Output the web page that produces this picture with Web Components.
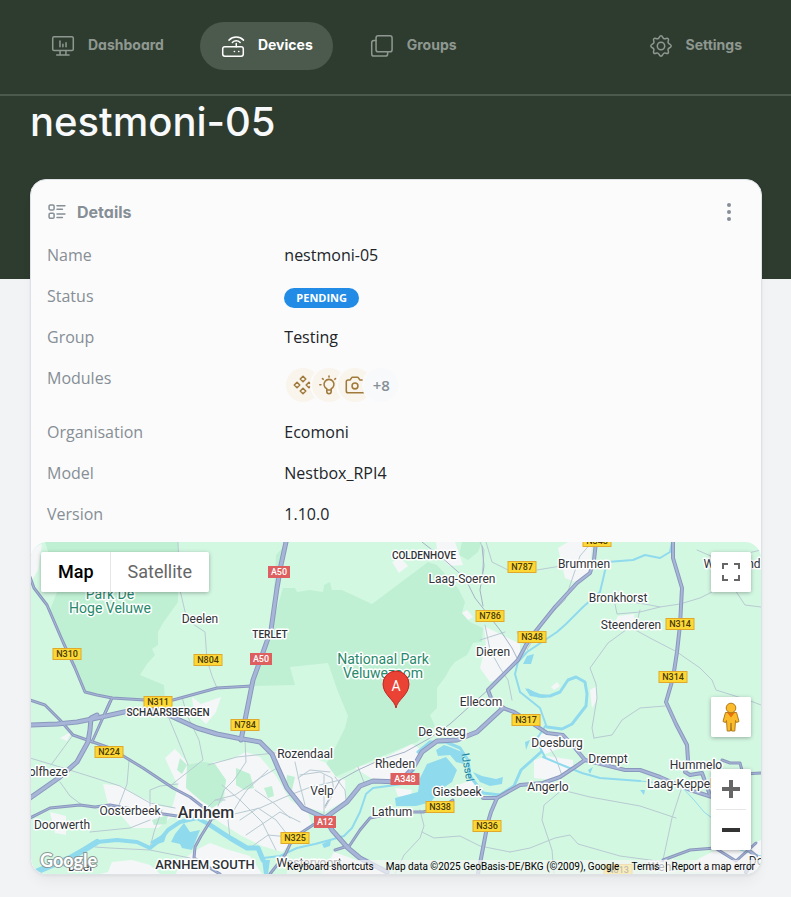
<!DOCTYPE html>
<html lang="en">
<head>
<meta charset="utf-8">
<meta name="viewport" content="width=device-width, initial-scale=1">
<title>nestmoni-05</title>
<style>
  :root {
    --green_dark: #2e3c30;
    --green_soft: #4b5a4d;
    --nav_text: #8f9890;
    --white: #f8f9fa;
    --page_bg: #f1f3f5;
    --card_bg: #fbfbfb;
    --grey_line: #dee2e6;
    --grey_text: #868e96;
    --text: #212529;
    --blue: #228be6;
    --brown: #a07a3b;
    --font_title: Inter, "Open Sans", sans-serif;
    --font_body: "Open Sans", "Noto Sans", sans-serif;
    --font_map: Roboto, "Liberation Sans", sans-serif;
  }
  body {
    margin: 0;
    background: var(--page_bg);
    color: var(--text);
    font-family: var(--font_body);
    font-size: 16px;
  }
</style>
</head>
<body>
<device-page heading="nestmoni-05">
  <app-nav slot="nav">
    <nav-item icon="dashboard">Dashboard</nav-item>
    <nav-item icon="devices" active>Devices</nav-item>
    <nav-item icon="groups">Groups</nav-item>
    <nav-item icon="settings" slot="end">Settings</nav-item>
  </app-nav>
  <details-card heading="Details">
    <map-view></map-view>
  </details-card>
</device-page>

<script>
const ICONS = {
  dashboard: `<rect x="2.5" y="3.5" width="19" height="12.7" rx="1.3"/><path d="M9.3 16.3v4M14.7 16.3v4M6.2 20.4h11.4M9.2 7.4v5.2M11.9 10.4v2.2M14.8 9v3.6"/>`,
  devices: `<rect x="2.5" y="12.6" width="19" height="8.8" rx="2"/><path d="M15 9.8v2.8M13.2 17h.2M17.2 17h.2M11.4 8.7a5 5 0 0 1 7.2 0M8.3 6.6a9.4 9.4 0 0 1 13.4 0"/>`,
  groups: `<rect x="6.5" y="2.6" width="14.8" height="14.8" rx="2"/><path d="M6.5 7h-2a2 2 0 0 0-2 2v10.3a2 2 0 0 0 2 2h10.7a2 2 0 0 0 2-2v-1.9"/>`,
  settings: `<circle cx="12" cy="12" r="3.4"/><path d="M12 2.6c1.600 0 1.500 2.200 2.900 2.700s2.600-1.100 3.700 0-.5 2.300 0 3.700 2.800 1.400 2.800 3-2.200 1.500-2.800 2.900 1.100 2.600 0 3.700-2.300-.5-3.700 0-1.300 2.800-2.900 2.800-1.500-2.200-2.900-2.800-2.600 1.100-3.700 0 .5-2.300 0-3.700S2.600 13.600 2.600 12s2.200-1.600 2.800-3-1.100-2.600 0-3.700 2.300.5 3.700 0 1.300-2.700 2.900-2.700z"/>`,
  details: `<rect x="2.5" y="3.5" width="6" height="6" rx="1.5"/><rect x="2.5" y="13.5" width="6" height="6" rx="1.5"/><path d="M12 4.5h9.5M12 8.7h6.5M12 14.3h9.5M12 18.6h6.5"/>`,
  diamonds: `<path d="M12 2.5l3 3-3 3-3-3zM12 15.5l3 3-3 3-3-3zM5.5 9l3 3-3 3-3-3zM18.5 9l3 3-3 3-3-3z"/>`,
  bulb: `<path d="M9.6 17.4v-1.3a5.4 5.4 0 1 1 4.8 0v1.3M9.6 17.4h4.8v1.8a2.4 2.4 0 0 1-4.8 0zM12 2.2v1.2M4.9 5l.8.8M19.1 5l-.8.8M2 11.8h1.2M20.8 11.8H22"/>`,
  camera: `<circle cx="12" cy="13" r="3.2"/><path d="M21.5 20.5h-17a2 2 0 0 1-2-2V8.5a2 2 0 0 1 2-2h2.3l1.4-2.3a1.4 1.4 0 0 1 1.2-.7h5.2a1.4 1.4 0 0 1 1.2.7l1.4 2.3h2.3a2 2 0 0 1 2 2v10"/>`
};

function icon(name, size, stroke) {
  return `<svg width="${size}" height="${size}" viewBox="0 0 24 24" fill="none" stroke="currentColor" stroke-width="${stroke}" stroke-linecap="round" stroke-linejoin="round" aria-hidden="true">${ICONS[name]}</svg>`;
}

class DevicePage extends HTMLElement {
  constructor() {
    super();
    this._root = this.attachShadow({ mode: 'open' });
    this._root.innerHTML =
      `<style>
        :host {
          display: block;
        }
        .banner {
          background: var(--green_dark);
          padding-bottom: 131px;
        }
        h1 {
          margin: 0 30px;
          color: var(--white);
          font-family: var(--font_title);
          font-feature-settings: "cv11";
          font-size: 40px;
          font-weight: 500;
          line-height: 52px;
        }
        main {
          margin: -100px 29px 0 30px;
          padding-bottom: 22px;
        }
      </style>
      <div class="banner">
        <slot name="nav"></slot>
        <h1></h1>
      </div>
      <main><slot></slot></main>`;
    this._root.querySelector('h1').textContent = this.getAttribute('heading');
  }
}

class AppNav extends HTMLElement {
  constructor() {
    super();
    this._root = this.attachShadow({ mode: 'open' });
    this._root.innerHTML =
      `<style>
        :host {
          display: block;
          border-bottom: 2px solid var(--green_soft);
        }
        nav {
          display: flex;
          justify-content: space-between;
          padding: 22px 29px 24px 30px;
        }
        .group {
          display: flex;
          gap: 16px;
        }
      </style>
      <nav>
        <div class="group"><slot></slot></div>
        <div class="group"><slot name="end"></slot></div>
      </nav>`;
  }
}

class NavItem extends HTMLElement {
  constructor() {
    super();
    this._root = this.attachShadow({ mode: 'open' });
    this._root.innerHTML =
      `<style>
        :host {
          display: block;
        }
        a {
          display: flex;
          align-items: center;
          gap: 12px;
          height: 48px;
          padding: 0 20px;
          border-radius: 24px;
          color: var(--nav_text);
          font-family: var(--font_title);
          font-feature-settings: "cv11";
          font-size: 14px;
          font-weight: 700;
          text-decoration: none;
        }
        span {
          padding-bottom: 3px;
        }
        :host([active]) a {
          background: var(--green_soft);
          color: #fff;
        }
      </style>
      <a href="#">${icon(this.getAttribute('icon'), 26, 1.4)}<span><slot></slot></span></a>`;
  }
}

class StatusBadge extends HTMLElement {
  constructor() {
    super();
    this._root = this.attachShadow({ mode: 'open' });
    this._root.innerHTML =
      `<style>
        :host {
          display: inline-block;
          vertical-align: middle;
          height: 20px;
          padding: 0 12px;
          border-radius: 10px;
          background: var(--blue);
          color: #fff;
          font-size: 11px;
          font-weight: 700;
          line-height: 20px;
        }
      </style>
      <slot></slot>`;
  }
}

class ModuleAvatar extends HTMLElement {
  constructor() {
    super();
    this._root = this.attachShadow({ mode: 'open' });
    const name = this.getAttribute('icon');
    this._root.innerHTML =
      `<style>
        :host {
          display: flex;
          align-items: center;
          justify-content: center;
          width: 34px;
          height: 34px;
          border: 2px solid var(--card_bg);
          border-radius: 50%;
          background: #f9f4ec;
          color: var(--brown);
        }
        :host(:not([icon])) {
          background: var(--white);
          color: var(--grey_text);
          font-size: 15px;
          font-weight: 600;
        }
      </style>
      ${name ? icon(name, 22, 1.7) : '<slot></slot>'}`;
  }
}

class DetailsCard extends HTMLElement {
  constructor() {
    super();
    this._root = this.attachShadow({ mode: 'open' });
    this._data = [
      ['Name', 'nestmoni-05'],
      ['Status', '<status-badge>PENDING</status-badge>'],
      ['Group', 'Testing'],
      ['Modules', `<div class="modules">
          <module-avatar icon="diamonds"></module-avatar>
          <module-avatar icon="bulb"></module-avatar>
          <module-avatar icon="camera"></module-avatar>
          <module-avatar>+8</module-avatar>
        </div>`],
      ['Organisation', 'Ecomoni'],
      ['Model', 'Nestbox_RPI4'],
      ['Version', '1.10.0']
    ];
    this._render();
  }

  _render() {
    this._root.innerHTML =
      `<style>
        :host {
          display: block;
          border: 1px solid var(--grey_line);
          border-radius: 16px;
          background: var(--card_bg);
          box-shadow: 0 1px 3px rgba(0, 0, 0, .05), 0 10px 15px -5px rgba(0, 0, 0, .06);
        }
        header {
          display: flex;
          align-items: center;
          gap: 10px;
          height: 55px;
          padding: 8px 16px 0;
          box-sizing: border-box;
          color: var(--grey_text);
        }
        h2 {
          flex: 1;
          margin: 0;
          font-family: var(--font_title);
          font-feature-settings: "cv11";
          font-size: 16px;
          font-weight: 700;
        }
        button {
          display: flex;
          align-items: center;
          justify-content: center;
          width: 32px;
          height: 32px;
          padding: 0;
          border: 0;
          background: none;
          color: inherit;
        }
        table {
          width: 100%;
          padding: 0 16px 7px;
          border-spacing: 0;
        }
        th, td {
          padding: 8px 0;
          line-height: 25px;
          text-align: left;
          vertical-align: top;
        }
        th {
          width: 34%;
          color: var(--grey_text);
          font-weight: 400;
        }
        .modules {
          display: flex;
        }
        .modules > * + * {
          margin-left: -12px;
        }
      </style>
      <header>
        ${icon('details', 20, 1.8)}
        <h2>${this.getAttribute('heading')}</h2>
        <button type="button" aria-label="More actions">
          <svg width="6" height="20" viewBox="0 0 6 20" fill="currentColor"><circle cx="3" cy="3" r="2"/><circle cx="3" cy="10" r="2"/><circle cx="3" cy="17" r="2"/></svg>
        </button>
      </header>
      <table><tbody>
        ${this._data.map(([name, value]) => `<tr><th scope="row">${name}</th><td>${value}</td></tr>`).join('')}
      </tbody></table>
      <slot></slot>`;
  }
}

/* map layers, all in the units of the map's viewBox */
const FOREST = [
  '45,542 178,542 178,602 163,623 158,632 158,645 152,649 155,655 147,664 140,675 164,685 165,700 112,698 85,692 63,642 50,610 57,592 48,572 51,560',
  '283,588 295,588 297,592 310,590 323,592 324,585 330,582 332,590 342,590 372,604 400,583 428,562 437,565 458,588 465,602 462,613 470,622 483,628 482,642 473,643 467,655 455,662 450,668 446,676 437,688 437,708 430,715 435,726 417,742 380,757 358,767 335,777 322,770 330,758 340,738 345,728 348,716 338,692 328,663 290,667 295,685 254,686 262,650 272,625',
  '462,542 482,542 478,552 468,560 459,555',
  '276,555 285,545 278,585 274,592',
  '187,765 203,762 215,764 226,780 222,802 212,808 200,800 186,788',
  '236,768 250,774 254,788 244,790 236,785',
  '180,758 187,765 182,774 177,770', '264,788 272,786 274,796 268,798',
  '152,820 168,815 166,824 154,825', '287,775 295,777 292,790 286,785'
];

const URBAN = [
  '103,784 122,786 138,796 160,806 172,808 178,786 165,758 175,749 188,763 186,785 200,800 212,808 224,800 226,780 213,762 230,760 246,752 260,757 276,776 290,800 308,812 312,826 296,838 282,852 262,846 240,835 215,819 195,815 170,818 158,828 132,828 118,812 108,804',
  '272,752 284,750 300,752 326,763 336,777 345,780 346,800 325,812 300,806 285,790',
  '196,850 210,843 226,849 250,856 262,874 176,874 180,862',
  '108,872 112,862 132,860 150,865 160,874 100,874',
  '355,768 380,760 412,744 422,750 410,770 395,780 374,780',
  '484,626 504,636 520,644 520,658 500,678 490,682 480,668 486,645',
  '558,548 568,542 592,542 590,573 575,582 565,578',
  '436,542 455,542 463,565 450,566 438,556', '392,562 401,558 408,566 399,573',
  '618,616 634,614 635,624 622,630 614,624', '538,734 563,734 566,746 545,754 538,748',
  '534,760 548,756 573,760 573,768 554,780 534,778', '192,697 201,704 221,697 216,712 206,724 194,712',
  '31,548 42,544 38,570 31,582', '50,812 66,816 66,835 55,833', '462,613 467,610 473,617 468,620',
  '395,788 412,790 410,798 398,796', '413,800 420,790 426,797 420,803', '455,786 472,780 482,794 462,798',
  '334,852 362,862 388,874 322,874', '680,872 700,858 716,850 740,850 761,840 761,874',
  '590,690 597,686 597,700 592,708', '60,738 71,732 67,741', '551,687 557,682 560,686 554,690'
];

const LAKES = [
  '427,764 446,757 457,770 452,782 440,790 431,802 416,806 396,806 395,798 418,792 420,778',
  '436,750 444,745 450,747 462,752 464,764 456,762 450,755 438,756', '473,772 482,776 496,779 503,777 502,784 490,786 480,782',
  '175,834 184,823 190,832 200,830 192,850 182,848 180,844 171,842', '150,842 160,836 168,830 164,842 154,845',
  '525,688 540,694 552,696 543,698 530,696', '527,656 534,654 531,664 523,664', '322,844 331,840 330,846 324,848',
  '640,790 645,790 644,795', '588,770 593,767 590,774', '525,742 530,740 526,750',
  '62,866 76,858 92,860 74,868', '262,860 270,860 268,874 264,874'
];

const RIVERS = [
  [6, '31,874 50,866 70,858 84,850 97,842'],
  [4, '97,842 117,840 137,842 150,848 160,840 168,830 180,822 197,818 210,825'],
  [5, '210,825 230,838 247,848 258,848 263,860'],
  [2, '263,858 280,856 297,848 315,844 330,840 344,836 352,828 360,812 366,794 373,788 388,786 402,784 414,770'],
  [3, '418,752 430,742 446,742 460,748 468,760 470,776 483,793 500,795 514,786'],
  [2, '545,757 536,740 546,725 540,708 530,700 520,692'],
  [2, '520,692 515,674 518,662 527,652 545,640 557,632 566,624 583,607 600,592 604,575 607,562 620,561 633,560 645,555 660,558 670,552 672,542'],
  [3, '528,690 538,696 550,696 560,692 568,680 576,677 585,682 587,694 586,706 572,724 562,729 547,727'],
  [2, '543,757 562,765 582,773 600,778 640,781'], [1, '640,781 680,785 694,800 704,812 712,818 740,850 761,856'],
  [3, '541,752 530,762 521,770 514,786']
];

const STREETS = [
  '178,542 180,590 187,620 205,632 207,660 212,676 217,688', '182,697 187,715 199,740 203,760 170,786',
  '168,716 178,740 188,765', '129,761 127,784 119,805', '51,765 62,750 73,735', '60,782 70,796 82,805',
  '30,758 60,767 95,778 120,786 150,803 175,808', '208,765 237,757 275,753', '245,740 246,762 234,780 224,790 218,806',
  '150,806 150,790 160,786 178,784', '212,820 230,815 260,808 285,797 308,788 340,780', '215,800 235,795 260,778 277,768',
  '222,785 240,800 262,822 276,850', '230,838 228,820 240,800 247,790 268,770', '240,820 258,808 276,820 290,838',
  '246,835 280,812 300,822', '200,815 215,800 225,800', '250,848 268,835 300,838', '255,790 275,804 290,818',
  '295,762 300,785 305,805', '300,775 320,772 332,778 334,792 325,808', '324,775 324,818', '298,778 310,770 330,772',
  '90,832 130,828 150,820', '150,848 154,832 162,810', '95,847 110,848 150,850 190,858',
  '358,767 365,785', '485,625 490,650 500,668 508,680 512,700', '480,640 505,632', '517,632 528,650',
  '600,595 620,600 650,605 660,607 680,604 700,598 712,592', '615,604 617,614 640,612 660,607', '638,618 640,610',
  '630,627 650,638 677,652 700,668 712,680 716,690 748,700 761,705', '630,627 608,643 590,668 596,684 597,698 592,728 594,738',
  '594,738 612,735 622,720 640,708 665,706', '560,780 562,790 590,797 640,806 676,818', '562,790 544,805 542,820 552,850 554,874',
  '510,852 530,848 555,838 570,835 578,844 620,856 665,862', '681,790 672,818 663,860', '420,810 424,826 420,838 404,855 395,874',
  '422,832 434,838 460,836 480,846 510,852', '537,570 567,565', '592,542 580,556 565,600 545,620 528,648',
  '697,550 720,560 735,590 745,605 761,607', '712,560 735,556 761,550', '486,542 492,562 508,570 520,572', '480,542 484,550 482,580',
  '546,742 556,758 562,776', '335,777 345,790 346,800'
];

const RAILS = [
  '325,806 340,780 358,770 380,760 405,752 430,738 450,724 470,706 488,690', '422,542 440,556 465,578 475,598 486,612 500,630 512,648 518,660',
  '482,546 484,566 480,590 483,606'
];

const ROADS = [
  [3, '30,577 34,588 47,605 63,642 75,668 85,692 97,695 112,698 145,700 173,700 195,694 217,688 252,686'],
  [3, '30,700 45,705 60,720 73,735 90,741 110,748 143,768 173,788 190,797 203,807 211,820 201,836 195,847 194,858 210,868 220,874'],
  [3, '30,818 50,808 80,805 95,807 110,805 143,811 177,816'],
  [3, '112,698 105,713'], [3, '110,702 92,742'],
  [3, '325,820 313,825 293,838 285,855 270,874'],
  [3, '348,848 360,830 370,818 400,812 423,812 440,808 453,800'],
  [3, '335,850 348,846'],
  [4, '503,708 491,698 488,690 500,678 518,660 526,645 535,632 555,607 577,583 590,573 594,560 596,542'],
  [4, '503,708 514,712 527,720 547,733 563,735 575,748 585,760 597,763 625,770 640,770 660,777 690,790 712,797'],
  [4, '585,760 575,767 560,777 543,783 520,785 497,798 483,798'],
  [4, '497,798 491,812 488,822 483,848 478,874'],
  [4, '673,542 673,558 682,588 680,625 677,652 673,678 666,702 676,724 687,745 688,760 685,772 690,775 702,773 710,795'],
  [3, '722,760 730,763 740,763 743,774 761,773'],
  [3, '663,860 690,850 715,848 736,861 756,843'], [4, '736,840 756,856 746,872'],
  [5, '286,542 281,565 277,588 271,630 261,658 253,680 247,710 241,740'],
  [5, '30,725 57,724 77,722 97,718 133,710 155,709 173,717 197,728 217,734 237,738 260,742 272,754 278,768 287,788 303,808 325,818 332,830 348,848 360,858 387,872'],
  [5, '97,715 91,718 90,730 88,742 77,762 60,777 30,798'],
  [5, '325,818 347,802 360,786 373,781 400,782 413,768 422,752 437,741 457,740 477,732 503,708']
];

const SIGNS = [
  ['A50', 279, 572], ['A50', 261, 659], ['A348', 405, 779], ['A12', 325, 822],
  ['N310', 67, 654], ['N804', 208, 660], ['N311', 158, 702], ['N784', 245, 725], ['N224', 109, 752],
  ['N787', 522, 567], ['N786', 490, 616], ['N348', 532, 637], ['N348', 597, 541], ['N314', 680, 624],
  ['N314', 673, 677], ['N317', 526, 720], ['N338', 440, 807], ['N336', 487, 826], ['N325', 295, 838],
  ['N813', 618, 870]
];

/* text, x and baseline; the last entry is the kind of place */
const PLACES = [
  ['Park De', 110, 599, 'park'], ['Hoge Veluwe', 110, 613, 'park'],
  ['Nationaal Park', 383, 664, 'park'], ['Veluwezoom', 383, 678, 'park'],
  ['COLDENHOVE', 424, 559, 'area'], ['TERLET', 270, 638, 'area'], ['SCHAARSBERGEN', 168, 716, 'area'],
  ['ARNHEM SOUTH', 205, 869, 'district'], ['Arnhem', 206, 818, 'city'],
  ['Deelen', 200, 623], ['Laag-Soeren', 462, 583], ['Brummen', 584, 568], ['Bronkhorst', 618, 602],
  ['Steenderen', 631, 629], ['Dieren', 493, 656], ['Ellecom', 481, 706], ['De Steeg', 442, 736],
  ['Rozendaal', 305, 758], ['Rheden', 395, 768], ['Velp', 322, 795], ['Giesbeek', 457, 796],
  ['Lathum', 392, 816], ['Doesburg', 557, 747], ['Drempt', 608, 763], ['Angerlo', 548, 791],
  ['Hummelo', 696, 769], ['Laag-Keppel', 680, 788], ['Wichmond', 732, 568], ['Wolfheze', 43, 776],
  ['Oosterbeek', 130, 815], ['Doorwerth', 62, 829], ['Driel', 80, 871], ['Westervoort', 309, 867],
  ['Wehl', 661, 871], ['Doetinchem', 781, 865]
];

class MapView extends HTMLElement {
  constructor() {
    super();
    this._root = this.attachShadow({ mode: 'open' });
    this._root.innerHTML =
      `<style>
        :host {
          display: block;
          position: relative;
          overflow: hidden;
          border-radius: 16px;
          font-family: var(--font_map);
        }
        .map {
          display: block;
          width: 100%;
        }
        .map text {
          font-size: 12px;
          text-anchor: middle;
          fill: #2f3337;
          stroke: #fff;
          stroke-width: 3px;
          stroke-linejoin: round;
          paint-order: stroke;
        }
        .map .park {
          fill: #27896b;
          font-size: 14px;
        }
        .map .area {
          font-size: 10px;
          font-weight: 500;
        }
        .map .district {
          font-size: 13px;
          font-weight: 500;
        }
        .map .city {
          font-size: 16px;
          font-weight: 500;
        }
        .map .sign {
          font-size: 9px;
          font-weight: 500;
          fill: #4a3b0a;
          stroke: none;
        }
        .map .sign.motorway {
          fill: #fff;
        }
        .map .water {
          fill: #2284a1;
          font-size: 11px;
          stroke: none;
        }
        .map .pin {
          font-size: 14px;
          fill: #fff;
          stroke: none;
        }
        .map .logo {
          fill: #fff;
          stroke: #8b9794;
          stroke-width: 2px;
          font-family: Lato, sans-serif;
          font-size: 18px;
          font-weight: 700;
          text-anchor: start;
        }
        button {
          display: flex;
          align-items: center;
          justify-content: center;
          width: 40px;
          height: 40px;
          padding: 0;
          border: 0;
          background: #fff;
          color: #666;
          font-family: inherit;
          font-size: 18px;
        }
        .types, .controls {
          position: absolute;
          top: 10px;
        }
        .types {
          left: 10px;
          display: flex;
          border-radius: 2px;
          overflow: hidden;
          box-shadow: 0 1px 4px rgba(0, 0, 0, .3);
        }
        .types button {
          width: auto;
          padding: 0 17px 2px;
        }
        .types button:first-child {
          padding-right: 16px;
          border-right: 1px solid #e6e6e6;
          color: #000;
          font-weight: 500;
        }
        .controls {
          right: 10px;
          bottom: 24px;
          display: flex;
          flex-direction: column;
        }
        .box {
          border-radius: 2px;
          background: #fff;
          box-shadow: 0 1px 4px rgba(0, 0, 0, .3);
          overflow: hidden;
        }
        .box:first-child {
          margin-bottom: auto;
        }
        .zoom {
          margin-top: 32px;
        }
        .zoom hr {
          height: 1px;
          margin: 0 5px;
          border: 0;
          background: #e6e6e6;
        }
        footer {
          position: absolute;
          right: 0;
          bottom: 0;
          display: flex;
          align-items: center;
          padding-right: 6px;
          background: rgba(245, 245, 245, .7);
          color: #000;
          font-size: 10px;
          line-height: 14px;
          white-space: nowrap;
        }
        footer > * + * {
          margin-left: 6px;
          padding-left: 6px;
        }
        footer > :last-child {
          padding-left: 5px;
          border-left: 1px solid #333;
          line-height: 10px;
        }
        footer button {
          display: block;
          width: auto;
          height: auto;
          background: none;
          color: inherit;
          font-size: inherit;
          line-height: inherit;
        }
        footer a {
          color: inherit;
          text-decoration: none;
        }
      </style>
      ${this._map()}
      <div class="types">
        <button type="button">Map</button>
        <button type="button">Satellite</button>
      </div>
      <div class="controls">
        <div class="box">
          <button type="button" aria-label="Toggle fullscreen view">
            <svg width="18" height="18" viewBox="0 0 18 18" fill="none" stroke="currentColor" stroke-width="2"><path d="M1 6V1h5M12 1h5v5M17 12v5h-5M6 17H1v-5"/></svg>
          </button>
        </div>
        <div class="box">
          <button type="button" aria-label="Street View Pegman">
            <svg width="20" height="30" viewBox="0 0 20 30" stroke="#b27a1c" stroke-linejoin="round">
              <path d="M4.5 10.5h11l2.5 9-2.5 1-1-2-.7 10.5h-3.2L10 21l-.6 8H6.2l-.7-10.500-1 2-2.500-1z" fill="#fbbc2c"/>
              <path d="M6 10.500h8l-4 5z" fill="#e8710a" stroke="none"/>
              <circle cx="10" cy="6" r="4.800" fill="#fbbc2c"/>
            </svg>
          </button>
        </div>
        <div class="box zoom">
          <button type="button" aria-label="Zoom in">
            <svg width="18" height="18" viewBox="0 0 18 18" fill="none" stroke="currentColor" stroke-width="4"><path d="M0 9h18M9 0v18"/></svg>
          </button>
          <hr>
          <button type="button" aria-label="Zoom out">
            <svg width="18" height="18" viewBox="0 0 18 18" fill="none" stroke="#333" stroke-width="4"><path d="M0 9h18"/></svg>
          </button>
        </div>
      </div>
      <footer>
        <button type="button">Keyboard shortcuts</button>
        <span>Map data ©2025 GeoBasis-DE/BKG (©2009), Google</span>
        <a href="#">Terms</a>
        <a href="#">Report a map error</a>
      </footer>`;
  }

  _areas(list, colour) {
    return `<g fill="${colour}">${list.map(p => `<polygon points="${p}"/>`).join('')}</g>`;
  }

  _lines(list, colour, extra = 0) {
    return `<g fill="none" stroke="${colour}" stroke-linejoin="round" stroke-linecap="round">
      ${list.map(([w, p]) => `<polyline points="${p}" stroke-width="${w + extra}"/>`).join('')}</g>`;
  }

  _sign([name, x, y]) {
    const motorway = name[0] === 'A';
    const w = name.length * 7;
    const fill = motorway ? '#dd5f5f' : '#fdd835';
    const line = motorway ? '#dd5f5f' : '#e0a92b';
    return `<rect x="${x - w / 2}" y="${y - 5.5}" width="${w}" height="11" fill="${fill}" stroke="${line}"/>
      <text class="sign ${motorway ? 'motorway' : ''}" x="${x}" y="${y + 3}">${name}</text>`;
  }

  _map() {
    return `<svg class="map" viewBox="31 542 730 332" role="img" aria-label="Map">
      <rect x="31" y="542" width="730" height="332" fill="#d3f8e2"/>
      ${this._areas(FOREST, '#bff0d4')}
      ${this._areas(URBAN, '#f5f6f8')}
      ${this._areas(FOREST.slice(4), '#bff0d4')}
      ${this._lines(STREETS.map(p => [1, p]), '#b8cad2')}
      ${this._lines(RIVERS, '#90daee')}
      ${this._areas(LAKES, '#90daee')}
      ${this._lines(RAILS.map(p => [1, p]), '#a5b2c5')}
      ${this._lines(ROADS, '#8b98bd')}
      ${this._lines(ROADS, '#a7b6d8', -2)}
      ${SIGNS.map(this._sign).join('')}
      <text class="water" transform="translate(464 768) rotate(80)">IJssel</text>
      ${PLACES.map(([name, x, y, kind]) => `<text class="${kind || 'town'}" x="${x}" y="${y}">${name}</text>`).join('')}
      <path d="M396 708c-1-8-13-13-13-24a13 13 0 0 1 26 0c0 11-12 16-13 24z" fill="#ea4335" stroke="#c5221f"/>
      <text class="pin" x="396" y="691">A</text>
      <text class="logo" x="40" y="867">Google</text>
    </svg>`;
  }
}

window.customElements.define('device-page', DevicePage);
window.customElements.define('app-nav', AppNav);
window.customElements.define('nav-item', NavItem);
window.customElements.define('status-badge', StatusBadge);
window.customElements.define('module-avatar', ModuleAvatar);
window.customElements.define('details-card', DetailsCard);
window.customElements.define('map-view', MapView);
</script>
</body>
</html>
